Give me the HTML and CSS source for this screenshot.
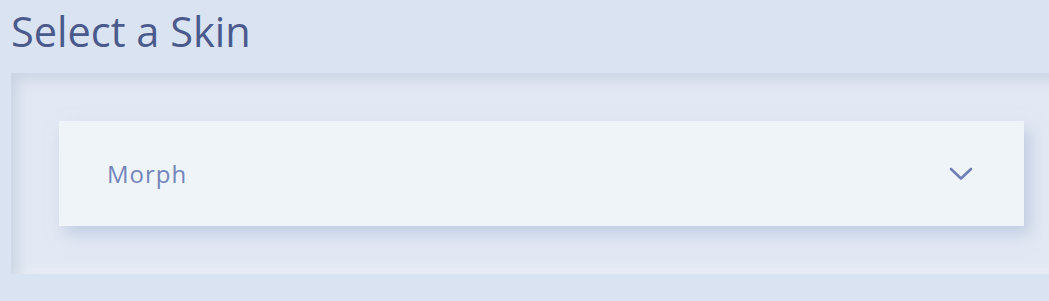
FILE: index.html
```html
<!DOCTYPE html>
<html lang="en">
<head>
<meta charset="utf-8">
<title>Select a Skin</title>
<link rel="stylesheet" href="styles.css">
</head>
<body>
<main class="page">
  <h1 class="title">Select a Skin</h1>
  <section class="panel">
    <div class="select">
      <span class="select-value">Morph</span>
      <svg class="chevron" width="24" height="14" viewBox="0 0 24 14" aria-hidden="true">
        <path d="M2 2 L12 11.5 L22 2" fill="none" stroke="#6f7fb6" stroke-width="2.6" stroke-linecap="round" stroke-linejoin="round"/>
      </svg>
    </div>
  </section>
</main>
</body>
</html>
```

FILE: styles.css
```css
html, body {
  margin: 0;
  padding: 0;
  background: #dae3f1;
  overflow: hidden;
}
body {
  font-family: "Open Sans", Lato, sans-serif;
  width: 1049px;
  height: 301px;
}
.page {
  padding: 0 0 0 11px;
}
.title {
  margin: 0;
  height: 73px;
  box-sizing: border-box;
  padding-top: 6px;
  font-size: 41.5px;
  font-weight: 400;
  line-height: 50px;
  color: #4a5a8c;
}
.panel {
  width: 1061px;
  box-sizing: border-box;
  padding: 48px;
  background: #e3e9f4;
  box-shadow: inset 6px 6px 14px rgba(170, 184, 206, 0.45), inset -4px -4px 10px rgba(255, 255, 255, 0.35);
}
.select {
  height: 105px;
  box-sizing: border-box;
  padding: 0 51px 0 48px;
  display: flex;
  align-items: center;
  justify-content: space-between;
  background: #eff4f9;
  box-shadow: 6px 8px 16px rgba(160, 178, 210, 0.55);
}
.select-value {
  font-size: 24px;
  letter-spacing: 1px;
  color: #7485ba;
}
.chevron {
  display: block;
}
```
